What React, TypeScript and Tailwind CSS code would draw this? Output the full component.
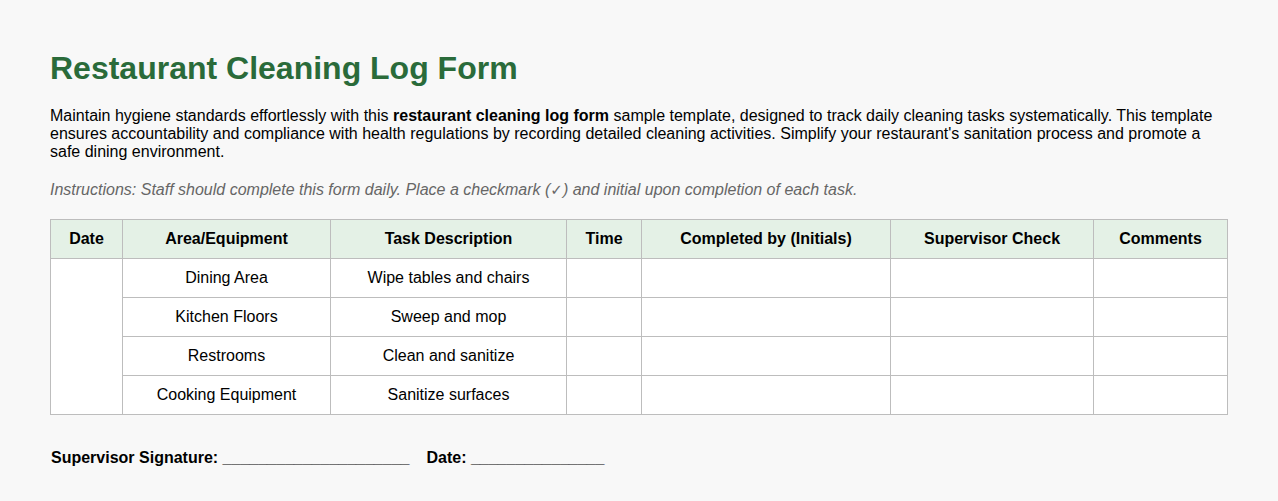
import React from "react";

const rows = [
  ["Dining Area", "Wipe tables and chairs"],
  ["Kitchen Floors", "Sweep and mop"],
  ["Restrooms", "Clean and sanitize"],
  ["Cooking Equipment", "Sanitize surfaces"],
];

const headers = [
  { t: "Date", w: "w-[72px]" },
  { t: "Area/Equipment", w: "w-[208px]" },
  { t: "Task Description", w: "w-[236px]" },
  { t: "Time", w: "w-[75px]" },
  { t: "Completed by (Initials)", w: "w-[249px]" },
  { t: "Supervisor Check", w: "w-[203px]" },
  { t: "Comments", w: "w-[134px]" },
];

export default function App() {
  return (
    <div
      className="min-h-screen bg-[#f8f8f8] px-[50px] pt-[49px] text-[16px] text-black"
      style={{ fontFamily: '"Liberation Sans", Arial, sans-serif' }}
    >
      <h1 className="text-[32px] font-bold leading-[38px] text-[#2a6b3a]">
        Restaurant Cleaning Log Form
      </h1>
      <p className="mt-[20px] leading-[18px]">
        Maintain hygiene standards effortlessly with this{" "}
        <strong>restaurant cleaning log form</strong> sample template, designed to track daily
        cleaning tasks systematically. This template ensures accountability and compliance with
        health regulations by recording detailed cleaning activities. Simplify your
        restaurant's sanitation process and promote a safe dining environment.
      </p>
      <p className="mt-[20px] leading-[18px] italic text-[#666666]">
        Instructions: Staff should complete this form daily. Place a checkmark (
        <span style={{ fontFamily: '"DejaVu Sans", sans-serif' }} className="text-[15px]">✓</span>
        ) and initial upon completion of each task.
      </p>
      <table className="mt-[20px] w-[1177px] table-fixed border-collapse bg-white">
        <thead>
          <tr className="h-[39px] bg-[#e4f1e6]">
            {headers.map((h) => (
              <th
                key={h.t}
                className={`${h.w} border border-[#bdbdbd] p-0 text-center font-bold`}
              >
                {h.t}
              </th>
            ))}
          </tr>
        </thead>
        <tbody>
          {rows.map((r, i) => (
            <tr key={r[0]} className="h-[39px]">
              {i === 0 && <td rowSpan={4} className="border border-[#bdbdbd]"></td>}
              <td className="border border-[#bdbdbd] p-0 text-center">{r[0]}</td>
              <td className="border border-[#bdbdbd] p-0 text-center">{r[1]}</td>
              <td className="border border-[#bdbdbd]"></td>
              <td className="border border-[#bdbdbd]"></td>
              <td className="border border-[#bdbdbd]"></td>
              <td className="border border-[#bdbdbd]"></td>
            </tr>
          ))}
        </tbody>
      </table>
      <div className="mt-[34px] flex pl-[1px] font-bold leading-[18px]">
        <span>Supervisor Signature: _____________________</span>
        <span className="ml-[17px]">Date: _______________</span>
      </div>
    </div>
  );
}
